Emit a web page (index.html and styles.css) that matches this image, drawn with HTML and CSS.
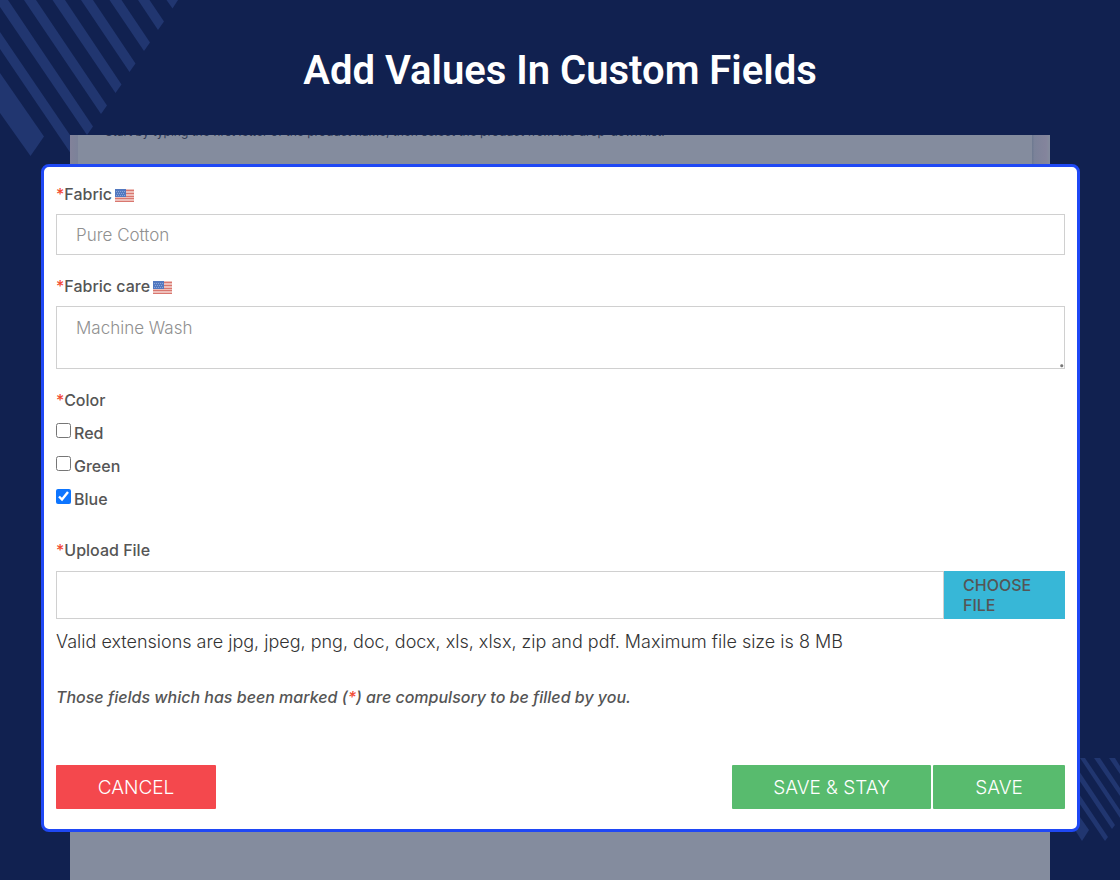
FILE: index.html
```html
<!DOCTYPE html>
<html lang="en">
<head>
    <meta charset="UTF-8">
    <meta name="viewport" content="width=device-width, initial-scale=1.0">
    <title>Add Values In Custom Fields</title>
    <link rel="stylesheet" href="styles.css">
</head>
<body>
    <svg class="stripes stripes-top" width="180" height="158" viewBox="0 0 180 158" aria-hidden="true">
        <path d="M166.500 0L172.500 8.500L178 0Z"/>
        <path d="M138 0L158 30L164 21.500L149.500 0Z"/>
        <path d="M109.500 0L144 51L150 42.500L121.500 0Z"/>
        <path d="M81 0L129.500 72L135.500 63.500L93 0Z"/>
        <path d="M52.500 0L115.500 93L121.500 84.500L65 0Z"/>
        <path d="M24 0L101 114L107 105.500L36 0Z"/>
        <path d="M0 7L87 135L93 126.500L8 0H0Z"/>
        <path d="M0 49L72.500 156L78.500 147.500L0 32Z"/>
        <path d="M0 113L30.500 156L44 136.500L0 73Z"/>
    </svg>
    <svg class="stripes stripes-bottom" width="45" height="84" viewBox="0 0 45 84" aria-hidden="true">
        <path d="M0 72L7 83L14 72L0 52Z"/>
        <path d="M0 39L30 83L33 79L0 30Z"/>
        <path d="M0 16L37 71L40 67L0 7Z"/>
        <path d="M5 0L45 60V52L10 0Z"/>
        <path d="M19 0L45 38V30L25 0Z"/>
        <path d="M34 0L45 16V8L40 0Z"/>
    </svg>

    <header class="page-header">
        <h1>Add Values In Custom Fields</h1>
    </header>

    <main class="stage">
        <div class="stage-strip">
            <p>Start by typing the first letter of the product name, then select the product from the drop-down list.</p>
        </div>

        <form class="modal">
            <div class="field">
                <label for="fabric"><span class="required">*</span>Fabric<svg class="flag" width="19" height="13" viewBox="0 0 19 13" role="img" aria-label="English">
                        <rect width="19" height="13" fill="#eebfba"/>
                        <path d="M0 1.500h19M0 4.500h19M0 7.500h19M0 9.500h19M0 12.500h19" stroke="#d9776f"/>
                        <rect width="11" height="8" fill="#5379c0"/>
                        <path d="M1 2.500h9M2 4.500h8M1 6.500h9" stroke="#8ba5d8" stroke-dasharray="1 1"/>
                    </svg></label>
                <input type="text" id="fabric" class="control" placeholder="Pure Cotton">
            </div>

            <div class="field">
                <label for="fabric-care"><span class="required">*</span>Fabric care<svg class="flag" width="19" height="13" viewBox="0 0 19 13" role="img" aria-label="English">
                        <rect width="19" height="13" fill="#eebfba"/>
                        <path d="M0 1.500h19M0 4.500h19M0 7.500h19M0 9.500h19M0 12.500h19" stroke="#d9776f"/>
                        <rect width="11" height="8" fill="#5379c0"/>
                        <path d="M1 2.500h9M2 4.500h8M1 6.500h9" stroke="#8ba5d8" stroke-dasharray="1 1"/>
                    </svg></label>
                <textarea id="fabric-care" class="control" placeholder="Machine Wash"></textarea>
            </div>

            <fieldset class="options">
                <legend><span class="required">*</span>Color</legend>
                <label class="option"><input type="checkbox" name="color" value="red">Red</label>
                <label class="option"><input type="checkbox" name="color" value="green">Green</label>
                <label class="option"><input type="checkbox" name="color" value="blue" checked>Blue</label>
            </fieldset>

            <div class="upload">
                <label for="upload-name"><span class="required">*</span>Upload File</label>
                <div class="upload-row">
                    <input type="text" id="upload-name" class="control" readonly>
                    <button type="button" class="choose">CHOOSE FILE</button>
                </div>
                <p class="hint">Valid extensions are jpg, jpeg, png, doc, docx, xls, xlsx, zip and pdf. Maximum file size is 8 MB</p>
            </div>

            <p class="note">Those fields which has been marked (<span class="required">*</span>) are compulsory to be filled by you.</p>

            <div class="actions">
                <button type="button" class="btn btn-cancel">CANCEL</button>
                <button type="submit" class="btn btn-stay">SAVE &amp; STAY</button>
                <button type="submit" class="btn btn-save">SAVE</button>
            </div>
        </form>
    </main>
</body>
</html>
```
FILE: styles.css
```css
:root {
    --background: #112150;
    --stripe: #213670;
    --stage: #848c9e;
    --accent: #1f48f5;
    --text: #555555;
    --border: #d0d0d0;
    --danger: #f4484d;
    --success: #58bb6e;
    --info: #37b7d7;
}

* {
    margin: 0;
    padding: 0;
    box-sizing: border-box;
}

body {
    background: var(--background);
    color: var(--text);
    font: 500 16px/20px Inter, sans-serif;
    min-height: 100vh;
    display: flex;
    flex-direction: column;
    position: relative;
    overflow-x: hidden;
}

.stripes {
    position: absolute;
    fill: var(--stripe);
}

.stripes-top {
    top: 0;
    left: 0;
}

.stripes-bottom {
    right: 0;
    bottom: 38px;
}

.page-header {
    position: relative;
    padding: 47px 20px 40px;
    text-align: center;
}

h1 {
    color: #ffffff;
    font: 600 40px/48px Roboto, sans-serif;
}

.stage {
    position: relative;
    flex: 1;
    margin: 0 70px;
    padding-bottom: 48px;
    background: var(--stage);
}

.stage-strip {
    height: 29px;
    padding: 0 35px;
    overflow: hidden;
    background:
        linear-gradient(90deg, #82829a, #7b8299) left / 8px 100% no-repeat,
        linear-gradient(90deg, #707b92 1px, #7b8299 2px, #84849c 14px, #848c9e) right / 18px 100% no-repeat;
    color: #303a55;
    font-size: 12px;
    font-weight: 400;
}

.stage-strip p {
    margin-top: -13px;
    white-space: nowrap;
}

.modal {
    margin: 0 -30px 0 -29px;
    padding: 17px 12px 20px;
    background: #ffffff;
    border: 3px solid var(--accent);
    border-radius: 8px;
}

.field {
    margin-bottom: 21px;
}

.field > label,
.upload > label {
    display: block;
    margin-bottom: 10px;
}

.required {
    color: #f34b35;
}

.flag {
    margin-left: 3px;
    vertical-align: -2px;
}

.control {
    display: block;
    width: 100%;
    height: 41px;
    padding: 1px 19px 0;
    border: 1px solid var(--border);
    background: #ffffff;
    color: var(--text);
    font: 300 17px/24px Inter, sans-serif;
}

.control::placeholder {
    color: #909090;
}

textarea.control {
    height: 63px;
    padding-top: 9px;
    resize: vertical;
}

textarea.control::-webkit-resizer {
    background: radial-gradient(circle at 85% 85%, #777777 1px, transparent 2px);
}

.options {
    border: none;
    margin-bottom: 25px;
}

.options legend {
    margin-bottom: 6px;
}

.option {
    display: flex;
    align-items: center;
    gap: 3px;
    height: 33px;
}

.option input {
    width: 15px;
    height: 15px;
    margin-bottom: 4px;
    accent-color: #0d75ff;
}

.upload > label {
    margin-bottom: 11px;
}

.upload-row {
    display: flex;
}

.upload-row .control {
    flex: 1;
    height: 48px;
}

.choose {
    width: 121px;
    padding: 0 19px;
    border: none;
    background: var(--info);
    color: var(--text);
    font: inherit;
    text-align: left;
}

.hint {
    margin-top: 13px;
    font-size: 18px;
    font-weight: 300;
    color: #333333;
}

.note {
    margin-top: 35px;
    font-style: italic;
}

.actions {
    display: flex;
    gap: 2px;
    margin-top: 58px;
}

.btn {
    height: 44px;
    padding-top: 2px;
    border: none;
    border-radius: 1px;
    background: var(--success);
    color: #ffffff;
    font: 300 19px/24px Inter, sans-serif;
}

.btn-cancel {
    width: 160px;
    margin-right: auto;
    background: var(--danger);
}

.btn-stay {
    width: 199px;
}

.btn-save {
    width: 132px;
}

@media (max-width: 700px) {
    .stage {
        margin: 0 40px;
    }

    .actions {
        flex-wrap: wrap;
    }
}
```
